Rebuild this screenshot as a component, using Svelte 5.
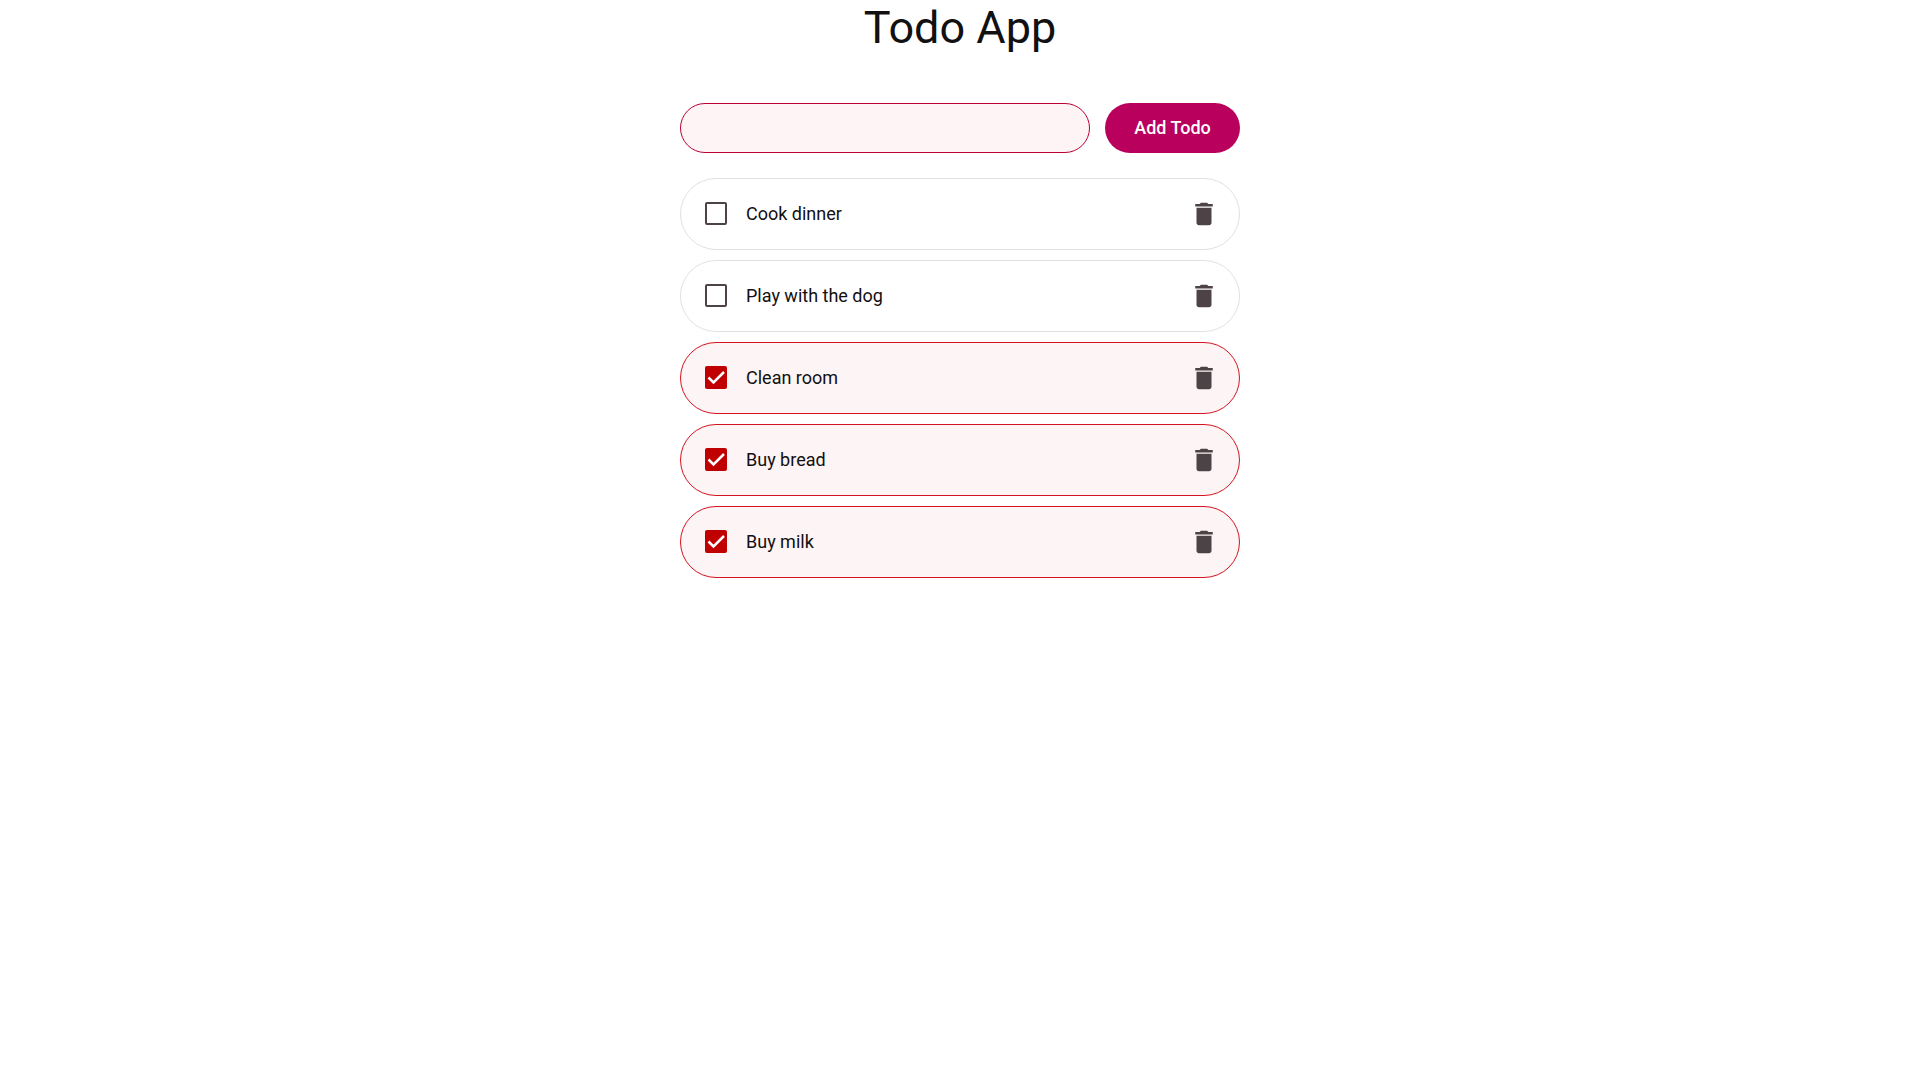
<script>
  let nextId = 6;
  let draft = $state('');
  let todos = $state([
    { id: 1, text: 'Cook dinner', done: false },
    { id: 2, text: 'Play with the dog', done: false },
    { id: 3, text: 'Clean room', done: true },
    { id: 4, text: 'Buy bread', done: true },
    { id: 5, text: 'Buy milk', done: true }
  ]);

  function add(event) {
    event.preventDefault();
    const text = draft.trim();
    if (!text) return;
    todos.unshift({ id: nextId++, text, done: false });
    draft = '';
  }

  function remove(id) {
    todos = todos.filter((todo) => todo.id !== id);
  }
</script>

<main>
  <h1>Todo App</h1>

  <form onsubmit={add}>
    <input class="draft" type="text" aria-label="New todo" bind:value={draft} />
    <button class="add" type="submit">Add Todo</button>
  </form>

  <ul>
    {#each todos as todo (todo.id)}
      <li class:done={todo.done}>
        <label>
          <span class="tick">
            <input type="checkbox" bind:checked={todo.done} />
            {#if todo.done}
              <svg viewBox="0 0 22 23" aria-hidden="true">
                <path d="M3.500 11.500 8.500 16.500 19 6" fill="none" stroke="#fff" stroke-width="2.500" />
              </svg>
            {/if}
          </span>
          <span class="text">{todo.text}</span>
        </label>
        <button class="remove" type="button" aria-label="Delete {todo.text}" onclick={() => remove(todo.id)}>
          <svg viewBox="0 0 24 24" aria-hidden="true">
            <path d="M6 19c0 1.100.9 2 2 2h8c1.100 0 2-.9 2-2V7H6v12zM19 4h-3.500l-1-1h-5l-1 1H5v2h14V4z" fill="currentColor" />
          </svg>
        </button>
      </li>
    {/each}
  </ul>
</main>

<style>
  :global(body) {
    margin: 0;
    background: #fff;
  }

  main {
    box-sizing: border-box;
    max-width: 560px;
    margin: 0 auto;
    color: #121011;
    font-family: Roboto, sans-serif;
    font-size: 18px;
  }

  h1 {
    margin: 0 0 48px;
    font-size: 45px;
    font-weight: 400;
    line-height: 55px;
    text-align: center;
  }

  form {
    display: flex;
    gap: 15px;
    margin-bottom: 25px;
  }

  .draft {
    box-sizing: border-box;
    flex: 1;
    min-width: 0;
    height: 50px;
    padding: 0 20px;
    border: 1px solid #ba0034;
    border-radius: 25px;
    background: #fff4f5;
    color: inherit;
    font: inherit;
    outline: none;
  }

  .add {
    width: 135px;
    height: 50px;
    padding: 0 0 2px;
    border: 0;
    border-radius: 25px;
    background: #b9005c;
    color: #fff;
    font: 500 18px Roboto, sans-serif;
    cursor: pointer;
  }

  ul {
    display: flex;
    flex-direction: column;
    gap: 10px;
    margin: 0;
    padding: 0;
    list-style: none;
  }

  li {
    display: flex;
    align-items: center;
    min-height: 70px;
    padding: 0 20px 0 24px;
    border: 1px solid #e4dfe1;
    border-radius: 36px;
  }

  li.done {
    border-color: #d41420;
    background: #fdf4f5;
  }

  label {
    display: flex;
    flex: 1;
    align-items: center;
    gap: 19px;
    padding-bottom: 2px;
    cursor: pointer;
  }

  .tick {
    display: grid;
    width: 22px;
    height: 23px;
  }

  .tick > * {
    grid-area: 1 / 1;
    width: 100%;
    height: 100%;
  }

  .tick input {
    box-sizing: border-box;
    margin: 0;
    border: 2px solid #4d4346;
    border-radius: 2px;
    appearance: none;
  }

  .tick input:checked {
    border-color: #c00000;
    background: #c00000;
  }

  .tick svg {
    pointer-events: none;
  }

  .remove {
    display: flex;
    padding: 0;
    border: 0;
    background: none;
    color: #4d4346;
    cursor: pointer;
  }

  .remove svg {
    width: 30px;
    height: 30px;
  }
</style>
